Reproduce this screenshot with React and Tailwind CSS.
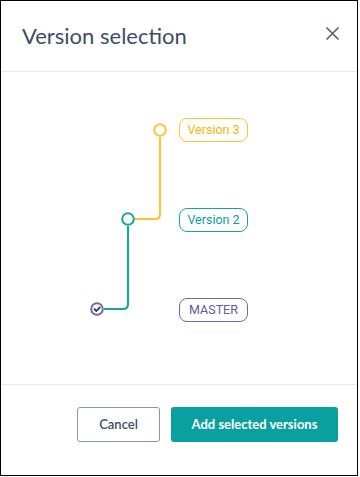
export default function App() {
    const versions = [
        { label: "Version 3", cls: "border-[#fcc32c] text-[#f7b500]" },
        { label: "Version 2", cls: "border-[#16a3a3] text-[#11999a]" },
        { label: "MASTER", cls: "border-[#6e6aa8] text-[#5f5b9c]" },
    ];

    return (
        <div className="bg-white w-[358px] h-[476px] border border-black flex flex-col font-['Lato',sans-serif]">
            {/* Header */}
            <div className="h-[71px] shrink-0 flex items-center justify-between pl-[21px] pr-[18px] pb-[2px] border-b border-[#e6e9ef]">
                <h2 className="text-[22px] font-normal text-[#3b4d69] leading-none mt-[1px]">
                    Version selection
                </h2>
                <button className="text-[#56647c] w-[14px] h-[14px] flex items-center justify-center -mt-[3px]">
                    <svg width="13" height="13" viewBox="0 0 13 13" fill="none">
                        <path d="M1 1L12 12M12 1L1 12" stroke="currentColor" strokeWidth="1.7" strokeLinecap="round" />
                    </svg>
                </button>
            </div>

            {/* Version graph */}
            <div className="relative flex-1">
                <svg className="absolute inset-0" width="356" height="312" viewBox="0 0 356 312" fill="none">
                    <path d="M159 65 V142 Q159 147 154 147 H133" stroke="#fcc32c" strokeWidth="2" />
                    <circle cx="159" cy="58" r="5.8" stroke="#fcc32c" strokeWidth="2" fill="white" />
                    <path d="M127 154 V232 Q127 237 122 237 H103" stroke="#16a3a3" strokeWidth="2" />
                    <circle cx="127" cy="147" r="5.8" stroke="#16a3a3" strokeWidth="2" fill="white" />
                    <circle cx="96" cy="237" r="5.8" stroke="#6e6aa8" strokeWidth="2" fill="white" />
                    <path d="M93.5 237.2 L95.4 239 L98.8 235.4" stroke="#2e2f55" strokeWidth="1.8" strokeLinecap="round" strokeLinejoin="round" />
                </svg>
                <div className="relative flex flex-col gap-[66px] pl-[178px] pt-[46px]">
                    {versions.map((v) => (
                        <div
                            key={v.label}
                            className={`w-[69px] h-[24px] rounded-[8px] border flex items-center justify-center text-[12.5px] font-['Roboto',sans-serif] ${v.cls}`}
                        >
                            {v.label}
                        </div>
                    ))}
                </div>
            </div>

            {/* Footer */}
            <div className="h-[91px] shrink-0 border-t border-[#e6e9ef] flex justify-end items-start gap-[11px] pt-[22px] pr-[19px]">
                <button className="w-[83px] h-[35px] rounded-[3px] border border-[#8896ab] text-[#3b4d69] text-[13px] font-semibold">
                    Cancel
                </button>
                <button className="w-[167px] h-[35px] rounded-[3px] bg-[#0aa0a0] text-white text-[13px] font-bold">
                    Add selected versions
                </button>
            </div>
        </div>
    );
}
